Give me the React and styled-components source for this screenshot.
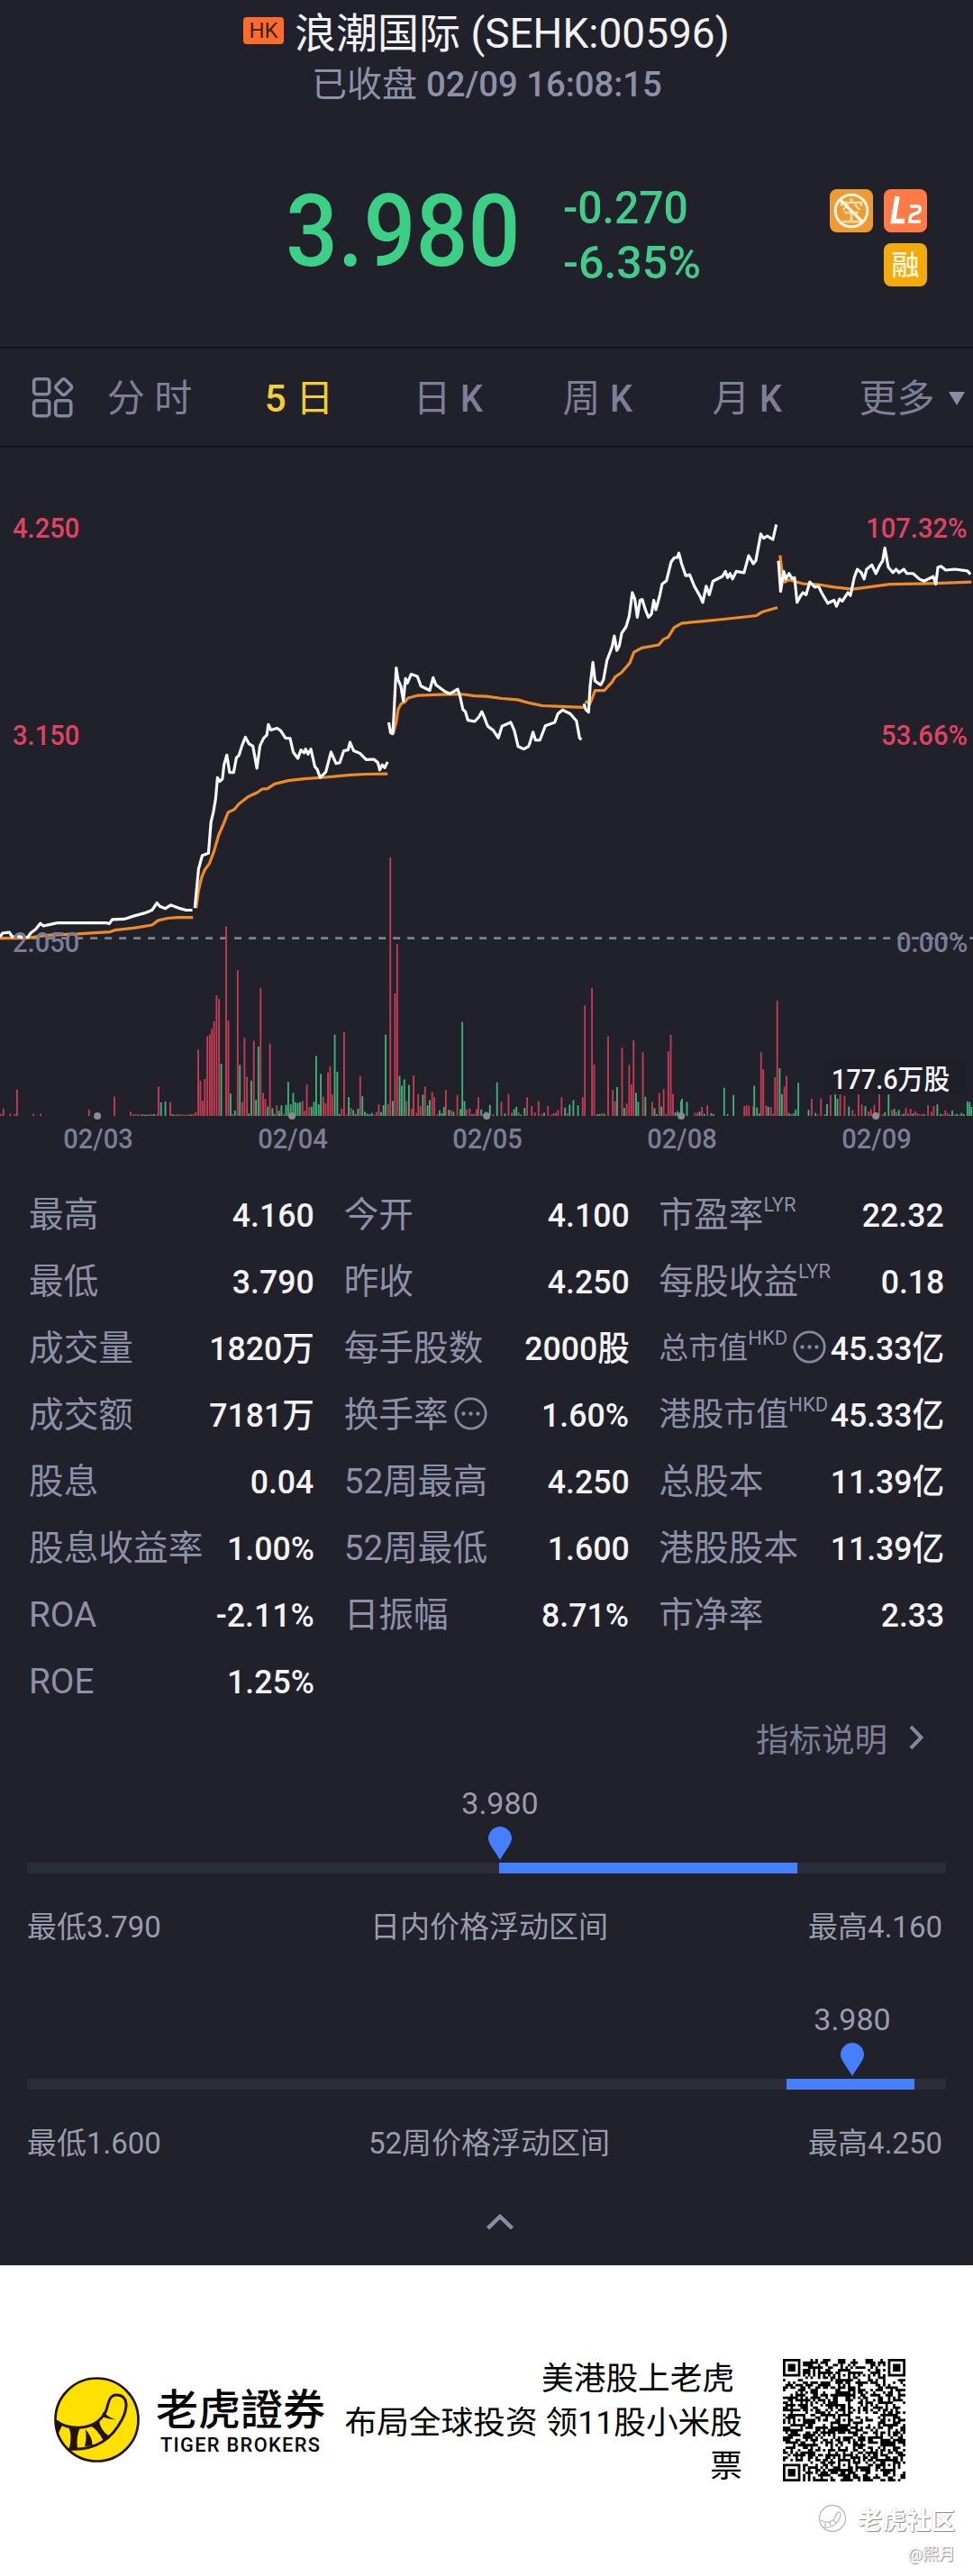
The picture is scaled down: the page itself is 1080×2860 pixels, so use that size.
import React from 'react'
import styled, { createGlobalStyle } from 'styled-components'

const GlobalStyle = createGlobalStyle`
body {
    margin: 0;
    background: #fff;
    font-family: Roboto, "Noto Sans CJK SC", sans-serif;
}
* {
    box-sizing: border-box;
}
`;

const Page = styled.div`
width: 1080px;
height: 2860px;
overflow: hidden;
`;

const Panel = styled.div`
height: 2515px;
background: #20212b;
color: #8e90a8;
`;

/* digits drawn a little narrower than Roboto */
const Din = styled.span`
display: inline-block;
white-space: nowrap;
font-weight: 500;
transform: scaleX(${props => props.$k || 0.94});
transform-origin: ${props => props.$from || 'left'} center;
`;

const Header = styled.div`
height: 385px;
`;

const TitleRow = styled.div`
display: flex;
align-items: center;
height: 74px;
padding-left: 270px;
color: #f2f2f5;
font-size: 46px;
line-height: 70px;
white-space: nowrap;
`;

const HkTag = styled.div`
width: 45px;
height: 30px;
margin: -6px 12px 0 0;
border-radius: 4px;
background: #ff6b2b;
color: #3a2420;
font-size: 24px;
line-height: 31px;
text-align: center;
`;

const Status = styled.div`
height: 40px;
padding-left: 346px;
color: #8e90a8;
font-size: 39px;
line-height: 40px;
white-space: nowrap;
`;

const PriceRow = styled.div`
display: flex;
margin-top: 91px;
padding-left: 317px;
height: 120px;
`;

const Price = styled.div`
width: 308px;
color: #3bd085;
font-size: 111px;
line-height: 104px;
`;

const Change = styled.div`
width: 296px;
color: #43cb89;
font-size: 50px;
line-height: 61px;
margin-top: -4px;
`;

const Badges = styled.div`
display: grid;
grid-template-columns: 48px 48px;
grid-template-rows: 48px 48px;
gap: 12px;
margin-top: 5px;
`;

const Badge = styled.div`
display: flex;
align-items: center;
justify-content: center;
grid-column: ${props => props.$col};
border-radius: 8px;
background: ${props => props.$bg};
color: #fff6dc;
font-size: 31px;
font-weight: 500;
line-height: 1;
`;

const Tabs = styled.div`
display: flex;
align-items: center;
height: 112px;
border-top: 2px solid #15151d;
border-bottom: 2px solid #15151d;
`;

const TabIcon = styled.div`
width: 83px;
height: 50px;
padding-left: 32px;
`;

const Tab = styled.div`
width: 166px;
color: ${props => props.$on ? '#f4cf31' : '#7d7f96'};
font-size: 42px;
line-height: 58px;
text-align: center;
white-space: pre;
margin-top: 3px;
`;

const MoreTab = styled(Tab)`
padding-left: 32px;
`;

const Arrow = styled.div`
display: inline-block;
margin-left: 15px;
vertical-align: 7px;
border-left: 9px solid transparent;
border-right: 9px solid transparent;
border-top: 15px solid #8a8ca4;
`;

const ChartBox = styled.div`
position: relative;
height: 783px;
padding-top: 43px;
`;

const AxisLabel = styled.div`
position: absolute;
top: ${props => props.$top}px;
${props => props.$right ? 'right: 6px;' : 'left: 14px;'}
color: ${props => props.$dim ? '#7b7d95' : '#e0435f'};
font-size: 31px;
line-height: 36px;
`;

const VolumeLabel = styled.div`
position: absolute;
right: 8px;
top: 680px;
width: 157px;
height: 38px;
padding-left: 8px;
background: #1e1f28;
color: #f4f4f6;
font-size: 31px;
line-height: 43px;
white-space: nowrap;
`;

const Dates = styled.div`
position: absolute;
top: 750px;
left: 1px;
display: grid;
grid-template-columns: repeat(5, 216px);
color: #7b7d95;
font-size: 31px;
line-height: 36px;
text-align: center;
`;

const Stats = styled.div`
display: grid;
grid-template-columns: repeat(3, minmax(0, 1fr));
grid-auto-rows: 74px;
column-gap: 33px;
padding: 0 32px;
margin-top: 32px;
`;

const Stat = styled.div`
display: flex;
align-items: center;
justify-content: space-between;
white-space: nowrap;
`;

const StatLabel = styled.div`
display: flex;
align-items: center;
color: #8e90a8;
font-size: ${props => props.$size || 38.7}px;
line-height: 56px;
`;

const Sup = styled.span`
align-self: flex-start;
font-size: 22px;
line-height: 34px;
`;

const StatValue = styled.div`
margin-left: -10px;
color: #f4f4f6;
font-size: 37.5px;
line-height: 56px;
`;

const More = styled.div`
display: flex;
align-items: center;
justify-content: flex-end;
gap: 24px;
height: 50px;
padding-right: 55px;
color: #7d7f96;
font-size: 36.5px;
`;

const Ranges = styled.div`
padding-top: 28px;
`;

const Range = styled.div`
height: 240px;
padding: 0 30px;
`;

const Marker = styled.div`
display: flex;
flex-direction: column;
align-items: center;
width: 100px;
height: 86px;
color: #9a9cab;
font-size: 34px;
line-height: 40px;
`;

const Track = styled.div`
height: 12px;
background: #2c2d3a;
`;

const Fill = styled.div`
height: 12px;
background: #457eff;
`;

const RangeText = styled.div`
display: flex;
justify-content: space-between;
margin-top: 36px;
padding-right: 4px;
color: #9a9cab;
font-size: 33px;
line-height: 48px;
`;

const RangeTitle = styled.span`
padding-left: 10px;
`;

const Collapse = styled.div`
display: flex;
justify-content: center;
padding-left: 30px;
margin-top: -4px;
`;

const Footer = styled.div`
position: relative;
display: flex;
height: 345px;
padding: 102px 0 0 60px;
color: #050505;
`;

const Brand = styled.div`
width: 201px;
padding: 33px 0 0 18px;
font-size: 47px;
line-height: 52px;
font-weight: 500;
white-space: nowrap;
`;

const BrandEn = styled.div`
padding-left: 5px;
font-size: 21.8px;
line-height: 26px;
letter-spacing: 1.3px;
`;

const Slogan = styled.div`
width: 468px;
font-size: 35.7px;
line-height: 48.5px;
text-align: right;
white-space: pre;
`;

const Watermark = styled.div`
position: absolute;
right: 20px;
top: 262px;
display: flex;
flex-direction: column;
align-items: flex-end;
color: #fff;
text-shadow: 1px 1px 1px #85858e, 0 0 1px #b4b4ba;
`;

const WmRow = styled.div`
display: flex;
align-items: center;
gap: 12px;
font-size: ${props => props.$size}px;
font-weight: ${props => props.$w};
height: ${props => props.$h}px;
`;

const whiteLines = [
    '0,1060 8,1051 30,1049 40,1060 60,1058 75,1062 90,1060 100,1050 115,1042 130,1028 140,1034 165,1030 185,1027 345,1027 352,1029 362,1019 400,1018 430,1011 470,1003 490,997 506,980 515,988 533,993 550,985 580,993 600,997 620,997',
    '628,992 640,900 652,868 672,863 680,790 688,765 695,735 701,685 708,694 717,688 722,655 731,632 740,673 753,673 762,638 770,633 780,610 791,590 802,605 815,611 828,663 838,610 850,592 860,585 865,560 873,573 893,569 905,575 920,592 935,593 945,625 960,640 970,620 980,627 985,618 993,630 1002,618 1015,660 1022,665 1032,685 1050,672 1067,625 1083,652 1095,650 1108,622 1122,620 1128,602 1140,622 1160,628 1180,643 1205,642 1218,650 1224,667 1232,655 1240,662 1249,648',
    '1253,555 1259,580 1266,582 1270,530 1277,427 1283,455 1292,470 1300,505 1307,452 1313,463 1325,442 1345,447 1357,470 1385,480 1396,450 1405,467 1435,483 1450,488 1475,477 1482,492 1492,525 1500,530 1508,550 1530,553 1543,543 1553,530 1562,545 1568,557 1573,565 1590,574 1606,592 1618,564 1646,555 1658,575 1670,612 1688,618 1703,612 1708,603 1718,578 1726,597 1740,597 1758,563 1788,555 1798,535 1813,526 1838,535 1858,552 1868,592 1874,596',
    '1882,511 1888,525 1897,531 1902,470 1911,414 1918,458 1936,467 1945,455 1956,410 1973,377 1980,352 1988,386 1996,375 2004,345 2018,330 2028,305 2038,250 2046,265 2054,308 2063,268 2070,266 2080,290 2090,308 2100,300 2107,268 2114,290 2126,258 2134,230 2148,222 2163,178 2173,168 2183,167 2188,157 2196,180 2210,210 2223,208 2238,235 2256,258 2265,273 2276,235 2286,255 2298,223 2328,212 2338,200 2345,215 2353,205 2361,218 2373,200 2398,203 2413,163 2428,182 2436,175 2452,112 2461,122 2473,117 2491,125 2502,90',
    '2509,175 2516,247 2526,200 2533,218 2543,205 2553,217 2561,215 2569,273 2580,258 2588,250 2598,255 2610,225 2626,237 2638,235 2648,250 2668,275 2688,268 2696,282 2706,265 2715,270 2733,250 2741,257 2753,215 2763,195 2776,203 2785,218 2793,195 2810,185 2823,205 2836,185 2845,175 2852,145 2863,190 2878,203 2888,195 2898,203 2913,195 2923,205 2943,205 2963,218 2978,223 3008,212 3016,230 3023,190 3033,188 3048,197 3078,195 3118,199 3128,207',
]

const orangeLines = [
    '0,1063 85,1063 150,1056 250,1053 355,1048 370,1044 430,1039 490,1032 510,1021 540,1016 570,1014 622,1014',
    '632,992 640,950 650,920 660,902 675,887 690,858 705,820 720,795 735,767 755,760 770,747 800,730 830,720 845,712 862,711 885,700 930,692 980,688 1040,685 1130,679 1180,677 1249,676',
    '1268,580 1277,555 1283,525 1292,512 1305,507 1315,498 1345,492 1440,489 1490,489 1530,493 1568,494 1618,499 1668,502 1708,510 1748,516 1808,518 1883,520',
    '1886,505 1901,512 1908,500 1918,480 1948,480 1973,460 1983,448 2003,438 2030,415 2043,390 2068,380 2123,373 2138,360 2153,355 2173,332 2198,322 2268,317 2338,312 2438,304 2458,295 2506,285',
    '2514,162 2523,215 2530,225 2543,220 2568,225 2588,229 2638,231 2688,237 2748,242 2798,237 2868,230 2968,229 3018,228 3131,225',
]

// x:top pairs, the base line is at 1481
const redBars = '3:1476 11:1464 33:1476 48:1476 55:1419 108:1476 131:1476 287:1466 369:1436 421:1471 430:1477 511:1412 549:1448 631:1472 639:1325 646:1398 653:1445 660:1394 668:1294 676:1289 683:1276 690:1258 698:1197 706:1206 729:1035 736:1257 766:1138 781:1449 788:1297 796:1389 818:1304 840:1180 848:1427 855:1441 870:1311 892:1456 975:1446 989:1407 1042:1436 1057:1379 1064:1365 1071:1430 1109:1284 1131:1462 1161:1387 1251:1453 1258:873 1273:1193 1280:1077 1310:1446 1333:1386 1348:1430 1355:1458 1370:1412 1393:1425 1400:1437 1437:1420 1474:1432 1504:1466 1542:1437 '
    + '1616:1448 1639:1429 1699:1437 1714:1458 1736:1446 1766:1458 1810:1437 1878:1437 1885:1221 1908:1180 1915:1360 1960:1294 1975:1420 1982:1446 2005:1320 2020:1452 2028:1361 2035:1407 2042:1303 2072:1331 2102:1448 2125:1427 2139:1418 2154:1329 2162:1290 2169:1430 2280:1456 2453:1331 2460:1371 2498:1390 2505:1210 2528:1412 2535:1387 2399:1458 2406:1456 2414:1457 2428:1459 2616:1441 2646:1440 2677:1432 2708:1430 2722:1434 2767:1430 2834:1430 2818:1455 2991:1456'

const greenBars = '519:1449 533:1447 713:1358 743:1428 773:1361 810:1398 833:1318 825:1443 863:1459 878:1463 907:1456 922:1455 929:1401 937:1454 945:1427 952:1449 967:1449 1012:1448 1019:1340 1027:1454 1034:1382 1079:1290 1087:1377 1124:1437 1154:1464 1168:1435 1236:1456 1243:1290 1266:1446 1288:1387 1295:1410 1303:1395 1318:1408 1363:1431 1378:1456 1385:1444 1431:1460 1490:1260 1497:1446 '
    + '1602:1402 1579:1455 1691:1462 1848:1444 1863:1456 1989:1413 2050:1427 2057:1448 2080:1436 2012:1462 2198:1441 2214:1448 2195:1446 2334:1415 2364:1432 2431:1410 2476:1460 2513:1369 2520:1430 2573:1403 2692:1430 2699:1441 2736:1459 2864:1430 2789:1458 3021:1454 3118:1447 3125:1448 3131:1460'

// minutes with hardly any trade, [from, to, highest bar]
const quiet = [[437, 505, 2], [556, 628, 2], [750, 900, 12], [900, 1250, 28], [1320, 1568, 18], [1575, 1880, 30], [1918, 2082, 24], [2102, 2190, 20], [2240, 2300, 18], [2330, 2350, 8], [2395, 2500, 24], [2535, 2578, 20], [2606, 2800, 28], [2800, 2900, 18], [2905, 3130, 20]]

const RED = '#c43c54'
const GREEN = '#43b078'

const bars = (list, color) => list.trim().split(' ').map(b => {
    const [x, y] = b.split(':')
    return { x: +x, h: 1481 - y, color }
})

const noise = (n) => {
    const v = Math.sin(n * 12.9898) * 43758.5453
    return v - Math.floor(v)
}

const big = [...bars(redBars, RED), ...bars(greenBars, GREEN)]
const small = []
quiet.forEach(([from, to, top]) => {
    for (let x = from; x < to; x += 7.46) {
        if (!big.some(b => Math.abs(b.x - x) < 5)) {
            const r = noise(x)
            small.push({ x, h: 3 + r * r * top, color: noise(x + 7) > 0.5 ? RED : GREEN })
        }
    }
})
const volume = [...big, ...small]

function Chart() {
    return (
        <svg width="1080" height="740" viewBox="0 0 3136 1568" preserveAspectRatio="none" fill="none">
            <line x1="12" y1="1063" x2="3136" y2="1063" stroke="#7e8098" strokeWidth="2.8" strokeDasharray="8 8" vectorEffect="non-scaling-stroke" />
            {volume.map((b, i) => <rect key={i} x={b.x - 2.7} y={1481 - b.h} width="5.400" height={b.h} fill={b.color} />)}
            {[0, 1, 2, 3, 4].map(i => <ellipse key={i} cx={314 + i * 627.2} cy="1481" rx="11.600" ry="8.500" fill="#8b8b8f" />)}
            {orangeLines.map((p, i) => <polyline key={i} points={p} stroke="#ee8b22" strokeWidth="3.200" strokeLinejoin="round" vectorEffect="non-scaling-stroke" />)}
            {whiteLines.map((p, i) => <polyline key={i} points={p} stroke="#f9f9fa" strokeWidth="3.200" strokeLinejoin="round" vectorEffect="non-scaling-stroke" />)}
        </svg>
    )
}

const SIZE = 49

const isDark = (x, y) => {
    const corners = [[0, 0], [SIZE - 7, 0], [0, SIZE - 7]]
    for (const [cx, cy] of corners) {
        const dx = x - cx
        const dy = y - cy
        if (dx >= -1 && dx <= 7 && dy >= -1 && dy <= 7) {
            const d = Math.max(Math.abs(dx - 3), Math.abs(dy - 3))
            return d !== 2 && d !== 4
        }
    }
    for (const ax of [6, 24, 42]) {
        for (const ay of [6, 24, 42]) {
            const d = Math.max(Math.abs(x - ax), Math.abs(y - ay))
            const corner = (ax === 6 && ay !== 24) || (ax === 42 && ay === 6)
            if (d <= 2 && !corner) return d !== 1
        }
    }
    if (x === 6 || y === 6) return (x + y) % 2 === 0
    return noise(x * 61 + y * 7.3) > 0.48
}

const QrSvg = styled.svg`
margin: 2px 0 0 45px;
`;

function QrCode() {
    let d = ''
    for (let y = 0; y < SIZE; y++) {
        for (let x = 0; x < SIZE; x++) {
            if (isDark(x, y)) d += `M${x} ${y}h1v1h-1z`
        }
    }
    return (
        <QrSvg width="136" height="136" viewBox={`0 0 ${SIZE} ${SIZE}`}>
            <path d={d} fill="#000" />
        </QrSvg>
    )
}

const LogoSvg = styled.svg`
margin-top: 22px;
`;

function TigerLogo() {
    return (
        <LogoSvg width="95" height="95" viewBox="0 0 285 285">
            <circle cx="142.500" cy="142.500" r="138" fill="#ffe100" stroke="#221409" strokeWidth="8" />
            <path d="M6 146 C50 178 132 182 170 120 C182 98 178 58 210 60 C248 62 246 104 226 142 C190 212 130 246 48 240" fill="none" stroke="#221409" strokeWidth="9" />
            <path d="M4 146 L28 160 L22 172 L10 198 Z M48 166 L88 166 Q72 200 78 240 L50 240 Q62 196 48 166 Z M104 174 Q128 200 128 228 L102 232 Q110 200 104 174 Z M120 162 L150 142 Q152 176 182 196 L164 212 Q146 176 120 162 Z M164 116 Q180 134 206 142 Q178 142 158 130 Z" fill="#221409" />
        </LogoSvg>
    )
}

function MiniTiger() {
    return (
        <svg width="32" height="32" viewBox="0 0 32 32" fill="none" stroke="#b9b9c0" strokeWidth="1.300">
            <circle cx="16" cy="16" r="14.500" />
            <path d="M3 18 C9 22 16 20 19 15 C20 11 21 9 23 9 C26 10 25 14 23 18 C19 24 13 27 6 26 M8 21 V25 M13 20 L14 24 M17 18 L20 21" />
        </svg>
    )
}

const DotsSvg = styled.svg`
margin: -3px 0 0 6px;
`;

function Dots() {
    return (
        <DotsSvg width="37" height="37" viewBox="0 0 37 37" fill="#85879e">
            <circle cx="18.500" cy="18.500" r="16.700" fill="none" stroke="#85879e" strokeWidth="2.800" />
            <circle cx="10.500" cy="18.500" r="2.200" />
            <circle cx="18.500" cy="18.500" r="2.200" />
            <circle cx="26.500" cy="18.500" r="2.200" />
        </DotsSvg>
    )
}

const stats = [
    { label: '最高', value: '4.160' },
    { label: '今开', value: '4.100' },
    { label: '市盈率', sup: 'LYR', value: '22.32' },
    { label: '最低', value: '3.790' },
    { label: '昨收', value: '4.250' },
    { label: '每股收益', sup: 'LYR', value: '0.18' },
    { label: '成交量', value: '1820万' },
    { label: '每手股数', value: '2000股' },
    { label: '总市值', sup: 'HKD', dots: true, size: 33, value: '45.33亿' },
    { label: '成交额', value: '7181万' },
    { label: '换手率', dots: true, value: '1.60%' },
    { label: '港股市值', sup: 'HKD', size: 36, value: '45.33亿' },
    { label: '股息', value: '0.04' },
    { label: '52周最高', value: '4.250' },
    { label: '总股本', value: '11.39亿' },
    { label: '股息收益率', value: '1.00%' },
    { label: '52周最低', value: '1.600' },
    { label: '港股股本', value: '11.39亿' },
    { label: 'ROA', value: '-2.11%' },
    { label: '日振幅', value: '8.71%' },
    { label: '市净率', value: '2.33' },
    { label: 'ROE', value: '1.25%' },
]

const Pin = styled.svg`
margin-top: 6px;
`;

function PriceRange({ low, high, title, price, at, from, to }) {
    return (
        <Range>
            <Marker style={{ marginLeft: at - 80 }}>
                {price}
                <Pin width="26" height="37" viewBox="0 0 26 37">
                    <path d="M13 0 C20 0 26 6 26 13 C26 19 20 25 13 37 C6 25 0 19 0 13 C0 6 6 0 13 0 Z" fill="#457eff" />
                </Pin>
            </Marker>
            <Track>
                <Fill style={{ marginLeft: from - 30, width: to - from }} />
            </Track>
            <RangeText>
                <span>最低{low}</span>
                <RangeTitle>{title}</RangeTitle>
                <span>最高{high}</span>
            </RangeText>
        </Range>
    )
}

export default function App() {
    return (
        <Page>
            <GlobalStyle />
            <Panel>
                <Header>
                    <TitleRow>
                        <HkTag>HK</HkTag>
                        浪潮国际 (SEHK:00596)
                    </TitleRow>
                    <Status>已收盘 <Din $k={0.98}>02/09 16:08:15</Din></Status>
                    <PriceRow>
                        <Price><Din $k={0.92}>3.980</Din></Price>
                        <Change>
                            <div><Din $k={0.96}>-0.270</Din></div>
                            <div><Din $k={1}>-6.35%</Din></div>
                        </Change>
                        <Badges>
                            <Badge $bg="#ee9a35" $col="1">
                                <svg width="40" height="40" viewBox="0 0 40 40" fill="none" stroke="#fff6dc">
                                    <path d="M20 6v5M9 15v-4h22v4M16 13l-5 6M24 13l5 6M12 22h16M20 22v10M10 32h20" stroke="#fbdcae" strokeWidth="2.500" />
                                    <circle cx="20" cy="20" r="17.800" strokeWidth="3" />
                                    <path d="M8 8L32 32" strokeWidth="3.200" />
                                </svg>
                            </Badge>
                            <Badge $bg="#ff7a45" $col="2">
                                <svg width="40" height="36" viewBox="0 0 40 36" fill="none" stroke="#fff">
                                    <path d="M11 2L6.500 29.500H19" strokeWidth="5.500" />
                                    <path d="M25 13H33Q37 13 36 17Q35.500 20 31 21Q25 22.500 25 27V30H37" strokeWidth="3.600" />
                                </svg>
                            </Badge>
                            <Badge $bg="#f3ab0b" $col="2">融</Badge>
                        </Badges>
                    </PriceRow>
                </Header>

                <Tabs>
                    <TabIcon>
                        <svg width="52" height="50" viewBox="0 0 52 50" fill="none" stroke="#85879f" strokeWidth="3.600">
                            <rect x="5.700" y="4.700" width="17" height="17" rx="3" />
                            <rect x="5.700" y="28.700" width="17" height="17" rx="3" />
                            <rect x="29.700" y="28.700" width="17" height="17" rx="3" />
                            <rect x="31.700" y="6.700" width="14" height="14" rx="2.500" transform="rotate(45 38.700 13.700)" />
                        </svg>
                    </TabIcon>
                    <Tab>分 时</Tab>
                    <Tab $on><Din $k={1}>5</Din> 日</Tab>
                    <Tab>日 <Din>K</Din></Tab>
                    <Tab>周 <Din>K</Din></Tab>
                    <Tab>月 <Din>K</Din></Tab>
                    <MoreTab>更多<Arrow /></MoreTab>
                </Tabs>

                <ChartBox>
                    <Chart />
                    <AxisLabel $top={72}><Din>4.250</Din></AxisLabel>
                    <AxisLabel $top={302}><Din>3.150</Din></AxisLabel>
                    <AxisLabel $top={532} $dim><Din>2.050</Din></AxisLabel>
                    <AxisLabel $top={72} $right><Din $from="right">107.32%</Din></AxisLabel>
                    <AxisLabel $top={302} $right><Din $from="right">53.66%</Din></AxisLabel>
                    <AxisLabel $top={532} $right $dim><Din $from="right">0.00%</Din></AxisLabel>
                    <VolumeLabel><Din $k={0.93}>177.6万股</Din></VolumeLabel>
                    <Dates>
                        {['02/03', '02/04', '02/05', '02/08', '02/09'].map(d => <Din key={d} $from="center">{d}</Din>)}
                    </Dates>
                </ChartBox>

                <Stats>
                    {stats.map((s, i) => (
                        <Stat key={i}>
                            <StatLabel $size={s.size}>
                                {s.label}
                                {s.sup && <Sup>{s.sup}</Sup>}
                                {s.dots && <Dots />}
                            </StatLabel>
                            <StatValue><Din $from="right" $k={0.95}>{s.value}</Din></StatValue>
                        </Stat>
                    ))}
                </Stats>

                <More>
                    指标说明
                    <svg width="16" height="28" viewBox="0 0 16 28" fill="none" stroke="#85879e" strokeWidth="4">
                        <path d="M2 2L13.500 14L2 26" />
                    </svg>
                </More>

                <Ranges>
                    <PriceRange low="3.790" high="4.160" title="日内价格浮动区间" price="3.980" at={555} from={554} to={885} />
                    <PriceRange low="1.600" high="4.250" title="52周价格浮动区间" price="3.980" at={946} from={873} to={1015} />
                </Ranges>

                <Collapse>
                    <svg width="30" height="18" viewBox="0 0 30 18" fill="none" stroke="#8a8ca3" strokeWidth="4.500">
                        <path d="M1.500 16L15 3L28.500 16" />
                    </svg>
                </Collapse>
            </Panel>

            <Footer>
                <TigerLogo />
                <Brand>
                    老虎證券
                    <BrandEn>TIGER BROKERS</BrandEn>
                </Brand>
                <Slogan>{'美港股上老虎 \n布局全球投资 领11股小米股\n票'}</Slogan>
                <QrCode />
                <Watermark>
                    <WmRow $size={27} $w={700} $h={38}><MiniTiger />老虎社区</WmRow>
                    <WmRow $size={18} $w={400} $h={38}>@熙月</WmRow>
                </Watermark>
            </Footer>
        </Page>
    )
}
